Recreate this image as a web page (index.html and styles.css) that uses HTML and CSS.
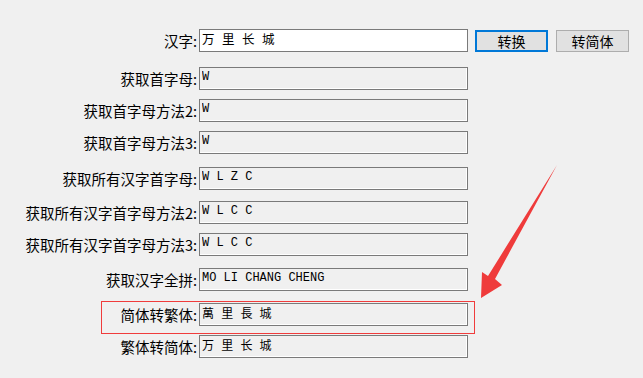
FILE: index.html
```html
<!DOCTYPE html>
<html lang="zh-CN">
<head>
    <meta charset="UTF-8">
    <title>汉字转换</title>
    <link rel="stylesheet" href="styles.css">
</head>
<body>

<div class="form">
    <label class="label">汉字:</label>
    <input class="field editable" type="text" value="万 里 长 城">
    <button class="btn btn-active">转换</button>
    <button class="btn btn-second">转简体</button>

    <label class="label">获取首字母:</label>
    <input class="field" type="text" value="W" readonly>

    <label class="label">获取首字母方法2:</label>
    <input class="field" type="text" value="W" readonly>

    <label class="label">获取首字母方法3:</label>
    <input class="field" type="text" value="W" readonly>

    <label class="label">获取所有汉字首字母:</label>
    <input class="field" type="text" value="W L Z C" readonly>

    <label class="label">获取所有汉字首字母方法2:</label>
    <input class="field" type="text" value="W L C C" readonly>

    <label class="label">获取所有汉字首字母方法3:</label>
    <input class="field" type="text" value="W L C C" readonly>

    <label class="label">获取汉字全拼:</label>
    <input class="field" type="text" value="MO LI CHANG CHENG" readonly>

    <label class="label">简体转繁体:</label>
    <input class="field" type="text" value="萬 里 長 城" readonly>

    <label class="label">繁体转简体:</label>
    <input class="field" type="text" value="万 里 长 城" readonly>
</div>

<!-- annotation overlay -->
<div class="highlight"></div>
<svg class="arrow" width="643" height="378" viewBox="0 0 643 378">
    <polygon points="557,165 495,279 502,285 481,298 482,272 488,276" fill="#ef3b3b"/>
</svg>

</body>
</html>
```

FILE: styles.css
```css
* {
    margin: 0;
    padding: 0;
    box-sizing: border-box;
}
body {
    background-color: #f0f0f0;
    font-family: "Noto Sans CJK SC", "Microsoft YaHei", sans-serif;
    color: #000;
    width: 643px;
    height: 378px;
    overflow: hidden;
    position: relative;
}
.form {
    display: grid;
    grid-template-columns: 199px 269px 80px 81px;
    grid-template-rows: 38px 32px 32px 36px 34px 32px 35px 35px 32px 23px;
    padding-top: 29px;
    align-items: start;
}
.label {
    grid-column: 1;
    height: 23px;
    line-height: 23px;
    font-size: 14.5px;
    text-align: right;
    padding-right: 2px;
    white-space: nowrap;
}
.field {
    grid-column: 2;
    height: 23px;
    width: 269px;
    border: 1px solid #7a7a7a;
    background-color: #f0f0f0;
    box-shadow: inset -1px -1px 0 #fff;
    font-family: "Liberation Mono", "Noto Sans CJK SC", monospace;
    font-size: 12px;
    padding: 0 2px 4px;
    color: #000;
    outline: none;
}
.field.editable {
    background-color: #fff;
    box-shadow: none;
    font-size: 12.5px;
}
.btn {
    width: 73px;
    height: 22px;
    margin: 1px 0 0 7px;
    background-color: #e1e1e1;
    border: 1px solid #adadad;
    font-family: "Noto Sans CJK SC", sans-serif;
    font-size: 14px;
    line-height: 18px;
    color: #000;
}
.btn-second {
    margin-left: 8px;
}
.btn-active {
    border: 2px solid #0078d7;
}
.highlight {
    position: absolute;
    left: 101px;
    top: 301px;
    width: 374px;
    height: 33px;
    border: 1px solid #f03c3c;
    z-index: 2;
}
.arrow {
    position: absolute;
    left: 0;
    top: 0;
    z-index: 3;
}
```
